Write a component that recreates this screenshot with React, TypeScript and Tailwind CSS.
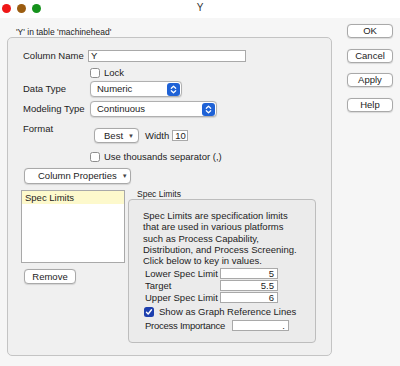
import React from "react";

function PushBtn({ children, className = "" }: { children: React.ReactNode; className?: string }) {
  return (
    <div
      className={`flex items-center justify-center rounded-[4px] border border-[#a9a9a9] bg-white shadow-[0_0.5px_1px_rgba(0,0,0,0.12)] text-[9.5px] leading-none text-[#1d1d1d] ${className}`}
    >
      {children}
    </div>
  );
}

function Stepper() {
  return (
    <div className="w-[13px] h-[13px] rounded-[3px] bg-[#1f62d6] flex items-center justify-center">
      <svg width="7" height="9" viewBox="0 0 7 9">
        <path
          d="M1.3 3.3 L3.5 1.2 L5.7 3.3 M1.3 5.7 L3.5 7.8 L5.7 5.7"
          stroke="white"
          strokeWidth="1.2"
          fill="none"
          strokeLinecap="round"
          strokeLinejoin="round"
        />
      </svg>
    </div>
  );
}

function Select({ label, className = "" }: { label: string; className?: string }) {
  return (
    <div
      className={`h-[16px] flex items-center justify-between rounded-[4px] border border-[#b0b0b0] bg-white shadow-[0_0.5px_1px_rgba(0,0,0,0.12)] pl-[6px] pr-[1px] ${className}`}
    >
      <span className="text-[9.5px] leading-none text-[#1d1d1d]">{label}</span>
      <Stepper />
    </div>
  );
}

function Check({ checked = false }: { checked?: boolean }) {
  if (checked) {
    return (
      <div className="w-[10px] h-[10px] rounded-[2.5px] bg-[#1d3fae] flex items-center justify-center shrink-0">
        <svg width="8" height="8" viewBox="0 0 8 8">
          <path d="M1.5 4.2 L3.2 6 L6.5 1.8" stroke="white" strokeWidth="1.4" fill="none" strokeLinecap="round" strokeLinejoin="round" />
        </svg>
      </div>
    );
  }
  return <div className="w-[10px] h-[10px] rounded-[2.5px] border border-[#8e8e8e] bg-white shrink-0" />;
}

function Arrow() {
  return <span className="text-[6px] leading-none text-[#444]">▼</span>;
}

function Field({ value, className = "" }: { value: string; className?: string }) {
  return (
    <div
      className={`h-[11px] border border-[#a9a9a9] bg-white flex items-center justify-end pr-[3px] text-[9.5px] leading-none text-[#1d1d1d] ${className}`}
    >
      {value}
    </div>
  );
}

export default function App() {
  return (
    <div className="w-[400px] h-[366px] bg-[#f6f6f6] overflow-hidden font-['Liberation_Sans',Arial,sans-serif] text-[#1d1d1d]">
      {/* title bar */}
      <div className="h-[18px] bg-white grid grid-cols-[1fr_auto_1fr] items-center pb-[2px]">
        <div className="flex items-center gap-[6px] pl-[2px]">
          <div className="w-[9px] h-[9px] rounded-full bg-[#ef1717]" />
          <div className="w-[9px] h-[9px] rounded-full bg-[#9b5c10]" />
          <div className="w-[9px] h-[9px] rounded-full bg-[#15921c]" />
        </div>
        <div className="text-[10px] leading-none text-[#333]">Y</div>
        <div />
      </div>

      {/* body */}
      <div className="flex pl-[7px]">
        {/* left */}
        <div className="w-[325px] flex flex-col">
          <div className="h-[19px] flex items-end pl-[9px]">
            <span className="text-[8.5px] leading-[10px]">'Y' in table 'machinehead'</span>
          </div>
          <div className="h-[319px] rounded-[5px] border border-[#c4c4c4] bg-[#f0f0f0] pl-[15px] pt-[12px] flex flex-col">
            {/* Column Name */}
            <div className="h-[12px] flex items-center">
              <div className="w-[65px] text-[9.5px] leading-none">Column Name</div>
              <div className="w-[158px] h-[12px] border border-[#a9a9a9] bg-white flex items-center pl-[2px] text-[9.5px] leading-none">
                Y
              </div>
            </div>
            {/* Lock */}
            <div className="mt-[6px] h-[10px] flex items-center pl-[67px] gap-[4px]">
              <Check />
              <span className="text-[9.5px] leading-none">Lock</span>
            </div>
            {/* Data Type */}
            <div className="mt-[3px] h-[16px] flex items-center">
              <div className="w-[67px] text-[9.5px] leading-none">Data Type</div>
              <Select label="Numeric" className="w-[92px]" />
            </div>
            {/* Modeling Type */}
            <div className="mt-[4px] h-[16px] flex items-center">
              <div className="w-[67px] text-[9.5px] leading-none">Modeling Type</div>
              <Select label="Continuous" className="w-[127px]" />
            </div>
            {/* Format */}
            <div className="mt-[6px] flex items-start">
              <div className="w-[65px] text-[9.5px] leading-[11px]">Format</div>
              <div className="mt-[5px] ml-[6px] flex items-center">
                <PushBtn className="w-[45px] h-[15px] !justify-end pr-[4px] gap-[5px]">
                  <span>Best</span>
                  <Arrow />
                </PushBtn>
                <span className="ml-[6px] text-[9.5px] leading-none">Width</span>
                <div className="ml-[3px] w-[16px] h-[11px] border border-[#a9a9a9] bg-white flex items-center pl-[2px] text-[9.5px] leading-none">
                  10
                </div>
              </div>
            </div>
            {/* thousands */}
            <div className="mt-[9px] h-[10px] flex items-center pl-[67px] gap-[4px]">
              <Check />
              <span className="text-[9.5px] leading-none">Use thousands separator (,)</span>
            </div>
            {/* Column Properties */}
            <div className="mt-[6px] ml-[1px]">
              <PushBtn className="w-[107px] h-[16px] !justify-start pl-[13px] gap-[5px]">
                <span>Column Properties</span>
                <Arrow />
              </PushBtn>
            </div>
            {/* list + spec */}
            <div className="mt-[6px] -ml-[2px] flex">
              <div className="flex flex-col">
                <div className="w-[104px] h-[73px] border border-[#a9a9a9] bg-white">
                  <div className="h-[13px] bg-[#fdf9cc] flex items-center pl-[3px] text-[9.5px] leading-none">
                    Spec Limits
                  </div>
                </div>
                <div className="mt-[6px] ml-[3px]">
                  <PushBtn className="w-[52px] h-[15px]">Remove</PushBtn>
                </div>
              </div>
              <div className="ml-[3px] flex flex-col">
                <div className="h-[9px] pl-[9px] text-[8.5px] leading-[9px]">Spec Limits</div>
                <div className="w-[188px] h-[144px] rounded-[4px] border border-[#bdbdbd] bg-[#ebebeb] pt-[10px] flex flex-col">
                  <div className="pl-[14px] text-[9.5px] leading-[11.3px] whitespace-nowrap">
                    Spec Limits are specification limits
                    <br />
                    that are used in various platforms
                    <br />
                    such as Process Capability,
                    <br />
                    Distribution, and Process Screening.
                    <br />
                    Click below to key in values.
                  </div>
                  <div className="mt-[1.5px] pl-[16px] flex flex-col">
                    {[
                      ["Lower Spec Limit", "5"],
                      ["Target", "5.5"],
                      ["Upper Spec Limit", "6"],
                    ].map(([l, v]) => (
                      <div key={l} className="h-[12px] flex items-start">
                        <div className="w-[75px] text-[9.5px] leading-[11px] whitespace-nowrap">{l}</div>
                        <Field value={v} className="w-[58px]" />
                      </div>
                    ))}
                  </div>
                  <div className="mt-[3px] h-[10px] pl-[15px] flex items-center gap-[5px]">
                    <Check checked />
                    <span className="text-[9.5px] leading-none whitespace-nowrap">Show as Graph Reference Lines</span>
                  </div>
                  <div className="mt-[3px] h-[11px] pl-[16px] flex items-center">
                    <div className="w-[87px] text-[9.5px] leading-none tracking-[-0.25px] whitespace-nowrap">
                      Process Importance
                    </div>
                    <Field value="." className="w-[57px]" />
                  </div>
                </div>
              </div>
            </div>
          </div>
        </div>

        {/* right buttons */}
        <div className="ml-[15px] pt-[6px] flex flex-col gap-[10.6px]">
          <PushBtn className="w-[46px] h-[14px]">OK</PushBtn>
          <PushBtn className="w-[46px] h-[14px]">Cancel</PushBtn>
          <PushBtn className="w-[46px] h-[14px]">Apply</PushBtn>
          <PushBtn className="w-[46px] h-[14px]">Help</PushBtn>
        </div>
      </div>
    </div>
  );
}
